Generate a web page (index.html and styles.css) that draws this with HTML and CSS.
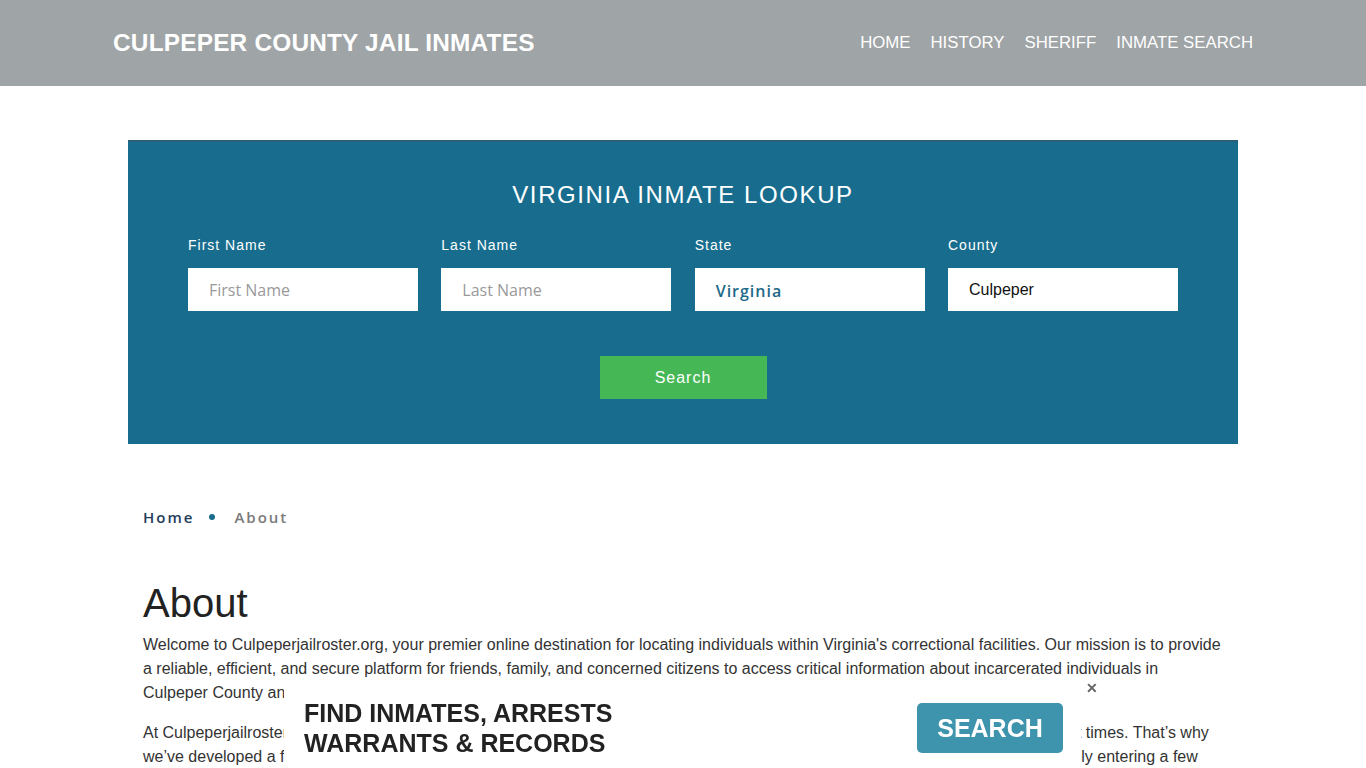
FILE: index.html
```html
<!DOCTYPE html>
<html lang="en">

<head>
    <meta charset="UTF-8">
    <meta name="viewport" content="width=device-width, initial-scale=1.0">
    <title>About - Culpeper County Jail Inmates</title>
    <link rel="stylesheet" href="styles.css">
</head>

<body>
    <header class="site-header">
        <div class="container header-inner">
            <a class="brand" href="#">Culpeper County Jail Inmates</a>
            <nav class="main-nav">
                <a href="#">Home</a>
                <a href="#">History</a>
                <a href="#">Sheriff</a>
                <a href="#">Inmate Search</a>
            </nav>
        </div>
    </header>

    <div class="container">
        <section class="lookup">
            <h2>Virginia Inmate Lookup</h2>
            <form class="lookup-form">
                <div class="field">
                    <label for="fname">First Name</label>
                    <input type="text" id="fname" placeholder="First Name">
                </div>
                <div class="field">
                    <label for="lname">Last Name</label>
                    <input type="text" id="lname" placeholder="Last Name">
                </div>
                <div class="field">
                    <label for="state">State</label>
                    <div class="select-box" id="state">Virginia</div>
                </div>
                <div class="field">
                    <label for="county">County</label>
                    <input type="text" id="county" class="filled" value="Culpeper">
                </div>
            </form>
            <div class="submit-row">
                <button type="button" class="btn-search">Search</button>
            </div>
        </section>

        <ul class="breadcrumb">
            <li><a href="#">Home</a></li>
            <li class="sep"></li>
            <li class="current">About</li>
        </ul>

        <article class="content">
            <h1>About</h1>
            <p>Welcome to Culpeperjailroster.org, your premier online destination for locating individuals within Virginia's correctional facilities. Our mission is to provide a reliable, efficient, and secure platform for friends, family, and concerned citizens to access critical information about incarcerated individuals in Culpeper County and across the state of Virginia.</p>
            <p>At Culpeperjailroster.org, we understand that finding information about a loved one who got arrested can be stressful and daunting at times. That’s why we’ve developed a free and comprehensive online search tool that lets you view public inmate records quickly and discreetly by simply entering a few details such as a first name, last name and county.</p>
        </article>
    </div>

    <div class="ad-bar">
        <div class="ad-text">FIND INMATES, ARRESTS<br>WARRANTS &amp; RECORDS</div>
        <a class="ad-btn" href="#">SEARCH</a>
        <span class="ad-close">&#x2715;</span>
    </div>
</body>

</html>
```

FILE: styles.css
```css
body {
    margin: 0;
    font-family: "Liberation Sans", Arial, sans-serif;
    color: #333;
    background: #fff;
}

a {
    text-decoration: none;
}

.container {
    width: 1110px;
    margin: 0 auto;
}

/* header */
.site-header {
    background: #9fa4a6;
    height: 86px;
}

.header-inner {
    display: flex;
    align-items: center;
    justify-content: space-between;
    height: 86px;
    width: 1140px;
}

.brand {
    color: #fff;
    font-weight: bold;
    font-size: 24.4px;
    text-transform: uppercase;
    letter-spacing: 0.2px;
}

.main-nav {
    display: flex;
    gap: 20px;
}

.main-nav a {
    color: #fff;
    font-size: 16.8px;
    text-transform: uppercase;
}

/* lookup box */
.lookup {
    margin-top: 54px;
    background: #186d8e;
    border-top: 2px solid #2b5f78;
    height: 302px;
    padding: 0 60px;
}

.lookup h2 {
    margin: 0;
    padding-top: 39px;
    text-align: center;
    color: #fff;
    font-weight: normal;
    font-size: 24px;
    letter-spacing: 1.6px;
    text-transform: uppercase;
}

.lookup-form {
    display: grid;
    grid-template-columns: repeat(4, 230px);
    justify-content: space-between;
    margin-top: 28px;
}

.field label {
    display: block;
    color: #fff;
    font-size: 14px;
    letter-spacing: 1px;
    margin-bottom: 15px;
}

.field input,
.select-box {
    box-sizing: border-box;
    width: 230px;
    height: 43px;
    border: 0;
    margin: 0;
    padding: 0 21px;
    font-family: "Open Sans", sans-serif;
    font-size: 16px;
    background: #fff;
    outline: none;
}

.field input::placeholder {
    color: #9a9a9a;
}

.field input.filled {
    font-family: "Liberation Sans", Arial, sans-serif;
    font-size: 16px;
    color: #111;
}

.select-box {
    display: flex;
    align-items: center;
    color: #1d6a88;
    font-weight: 600;
    letter-spacing: 1px;
    padding-top: 2px;
}

.submit-row {
    display: flex;
    justify-content: center;
    margin-top: 45px;
}

.btn-search {
    width: 167px;
    height: 43px;
    border: 0;
    background: #46b755;
    color: #fff;
    font-family: "Liberation Sans", Arial, sans-serif;
    font-size: 16px;
    letter-spacing: 1px;
}

/* breadcrumb */
.breadcrumb {
    list-style: none;
    display: flex;
    align-items: center;
    gap: 15px;
    margin: 63px 0 0;
    padding: 0 15px;
    font-family: "Open Sans", sans-serif;
    font-size: 15px;
    letter-spacing: 2px;
}

.breadcrumb a {
    color: #233b5a;
    font-weight: 600;
}

.breadcrumb .sep {
    width: 6px;
    height: 6px;
    border-radius: 50%;
    background: #186d8e;
    margin-right: 4px;
}

.breadcrumb .current {
    color: #7a7a7a;
    font-weight: 600;
}

/* content */
.content {
    padding: 0 15px;
    margin-top: 52px;
}

.content h1 {
    margin: 0 0 6px;
    font-size: 40px;
    font-weight: normal;
    color: #222;
    line-height: 48px;
}

.content p {
    margin: 0 0 16px;
    font-size: 16px;
    line-height: 24px;
    color: #333;
}

/* sticky ad */
.ad-bar {
    position: fixed;
    left: 284px;
    bottom: 0;
    width: 797px;
    height: 82px;
    background: #fff;
    display: flex;
    align-items: center;
    justify-content: space-between;
    box-sizing: border-box;
    padding: 2px 18px 0 20px;
}

.ad-text {
    font-weight: bold;
    font-size: 25px;
    line-height: 30px;
    color: #222;
}

.ad-btn {
    background: #3e94ad;
    color: #fff;
    font-weight: bold;
    font-size: 25px;
    width: 146px;
    height: 50px;
    border-radius: 5px;
    display: flex;
    align-items: center;
    justify-content: center;
}

.ad-close {
    position: absolute;
    right: -17px;
    top: -6px;
    color: #666;
    font-size: 14px;
    font-weight: bold;
}
```
